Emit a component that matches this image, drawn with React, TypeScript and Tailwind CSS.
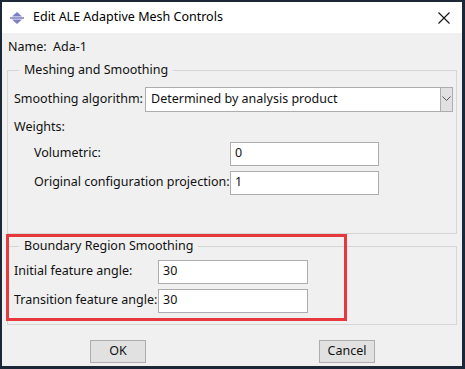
const font = { fontFamily: '"Noto Sans", "Open Sans", sans-serif' };

function TextBox({ value, className }: { value: string; className: string }) {
  return (
    <div
      className={`h-[24px] bg-white border border-[#adadad] flex items-center px-[4px] text-[12.5px] text-[#111] ${className}`}
    >
      {value}
    </div>
  );
}

export default function App() {
  return (
    <div
      className="w-[465px] h-[369px] bg-[#1b2636] pt-[2px] pl-[2px] pr-[3px] pb-[3px] overflow-hidden whitespace-nowrap"
      style={font}
    >
      <div className="w-full h-full flex flex-col bg-[#f0f0f0] text-[12.5px] text-[#111] leading-none">
        {/* title bar */}
        <div className="h-[31px] bg-white flex items-center pl-[8px] pr-[8px] shrink-0">
          <svg width="14" height="12" viewBox="0 0 14 12" className="mr-[9px]">
            <path d="M7 0 L12 4.5 H2 Z" fill="#7b7fc4" />
            <rect x="0" y="5" width="14" height="2" fill="#9a9cd0" />
            <path d="M7 12 L12 7.5 H2 Z" fill="#7b7fc4" />
          </svg>
          <span className="text-[12.5px] text-black">Edit ALE Adaptive Mesh Controls</span>
          <svg width="12" height="12" viewBox="0 0 12 12" className="ml-auto mr-[4px]">
            <path d="M0.5 0.5 L11.5 11.5 M11.5 0.5 L0.5 11.5" stroke="#111" strokeWidth="1.1" />
          </svg>
        </div>

        {/* name */}
        <div className="h-[28px] flex items-center pl-[6px] shrink-0">
          Name:&nbsp;&nbsp;Ada-1
        </div>

        {/* meshing group */}
        <fieldset className="mx-[5px] mt-[3px] h-[170px] border border-[#d6d6d6] px-[6px] pb-0 min-w-0 shrink-0">
          <legend className="ml-[5px] px-[5px]">Meshing and Smoothing</legend>
          <div className="flex items-center mt-[10px]">
            <span className="w-[131px] shrink-0">Smoothing algorithm:</span>
            <div className="h-[25px] flex-1 -mr-[3px] bg-white border border-[#adadad] flex items-center pl-[5px]">
              <span className="flex-1">Determined by analysis product</span>
              <div className="w-[12px] h-[23px] bg-[#e1e1e1] border-l border-[#adadad] flex items-center justify-center">
                <svg width="9" height="6" viewBox="0 0 9 6">
                  <path d="M0.5 0.5 L4.5 4.5 L8.5 0.5" fill="none" stroke="#555" strokeWidth="1" />
                </svg>
              </div>
            </div>
          </div>
          <div className="mt-[9px] h-[14px] flex items-center">Weights:</div>
          <div className="pl-[20px] mt-[7px] flex flex-col gap-[5px]">
            <div className="flex items-center">
              <span className="w-[196px] shrink-0">Volumetric:</span>
              <TextBox value="0" className="w-[149px]" />
            </div>
            <div className="flex items-center">
              <span className="w-[196px] shrink-0">Original configuration projection:</span>
              <TextBox value="1" className="w-[149px]" />
            </div>
          </div>
        </fieldset>

        {/* boundary group */}
        <div className="relative mx-[5px] mt-[6px] shrink-0">
          <fieldset className="h-[85px] border border-[#d6d6d6] px-[6px] min-w-0">
            <legend className="ml-[5px] px-[5px]">Boundary Region Smoothing</legend>
            <div className="flex flex-col gap-[5px] mt-[7px]">
              <div className="flex items-center">
                <span className="w-[144px] shrink-0">Initial feature angle:</span>
                <TextBox value="30" className="w-[150px]" />
              </div>
              <div className="flex items-center">
                <span className="w-[144px] shrink-0">Transition feature angle:</span>
                <TextBox value="30" className="w-[150px]" />
              </div>
            </div>
          </fieldset>
          <div className="absolute left-[-1px] top-[-6px] w-[341px] h-[87px] border-[3px] border-[#e5393e] pointer-events-none" />
        </div>

        {/* buttons */}
        <div className="flex mt-[15px] pl-[88px]">
          <button className="w-[56px] h-[23px] bg-[#e1e1e1] border border-[#adadad]">OK</button>
          <button className="w-[56px] h-[23px] bg-[#e1e1e1] border border-[#adadad] ml-[173px]">Cancel</button>
        </div>
      </div>
    </div>
  );
}
